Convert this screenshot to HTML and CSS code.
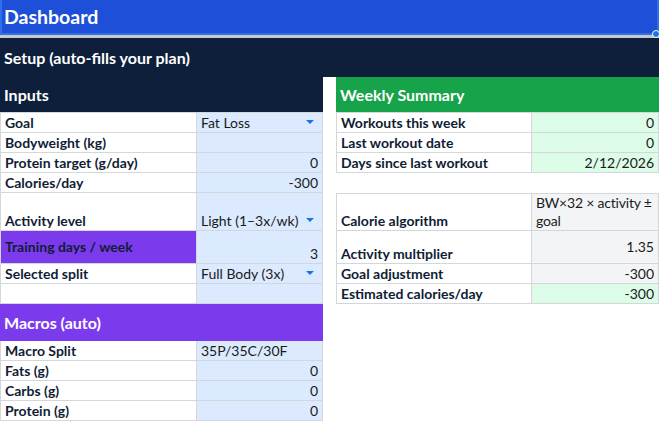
FILE: index.html
```html
<!DOCTYPE html>
<html lang="en">
<head>
<meta charset="utf-8">
<title>Dashboard</title>
<link rel="stylesheet" href="styles.css">
</head>
<body>
<div class="page">
  <header class="titlebar">
    <span class="title">Dashboard</span>
    <span class="handle"></span>
  </header>
  <div class="freeze"></div>
  <main class="sheet">
    <div class="c span5 navy head mid">Setup (auto-fills your plan)</div>

    <div class="c span2 navy head mid">Inputs</div>
    <div class="c col-d span2 green head mid">Weekly Summary</div>

    <div class="c col-a lab top">Goal</div>
    <div class="c col-b blue top dd"><span>Fat Loss</span><i class="arrow"></i></div>
    <div class="c col-d lab top">Workouts this week</div>
    <div class="c col-e mint num top">0</div>

    <div class="c col-a lab">Bodyweight (kg)</div>
    <div class="c col-b blue"></div>
    <div class="c col-d lab">Last workout date</div>
    <div class="c col-e mint num">0</div>

    <div class="c col-a lab">Protein target (g/day)</div>
    <div class="c col-b blue num">0</div>
    <div class="c col-d lab">Days since last workout</div>
    <div class="c col-e mint num">2/12/2026</div>

    <div class="c col-a lab">Calories/day</div>
    <div class="c col-b blue num">-300</div>

    <div class="c col-a lab">Activity level</div>
    <div class="c col-b blue dd"><span>Light (1–3x/wk)</span><i class="arrow"></i></div>
    <div class="c col-d lab top">Calorie algorithm</div>
    <div class="c col-e grey wrap top">BW×32 × activity ± goal</div>

    <div class="c col-a purple lab mid">Training days / week</div>
    <div class="c col-b blue num">3</div>
    <div class="c col-d lab">Activity multiplier</div>
    <div class="c col-e grey num mid">1.35</div>

    <div class="c col-a lab">Selected split</div>
    <div class="c col-b blue dd"><span>Full Body (3x)</span><i class="arrow"></i></div>
    <div class="c col-d lab">Goal adjustment</div>
    <div class="c col-e grey num">-300</div>

    <div class="c col-a"></div>
    <div class="c col-b blue"></div>
    <div class="c col-d lab">Estimated calories/day</div>
    <div class="c col-e mint num">-300</div>

    <div class="c span2 violet head mid">Macros (auto)</div>

    <div class="c col-a lab">Macro Split</div>
    <div class="c col-b blue">35P/35C/30F</div>

    <div class="c col-a lab">Fats (g)</div>
    <div class="c col-b blue num">0</div>

    <div class="c col-a lab">Carbs (g)</div>
    <div class="c col-b blue num">0</div>

    <div class="c col-a lab">Protein (g)</div>
    <div class="c col-b blue num">0</div>
  </main>
</div>
</body>
</html>
```
FILE: styles.css
```css
* { box-sizing: border-box; }
html, body { margin: 0; padding: 0; background: #ffffff; }
body {
  font-family: "Lato", "Carlito", "Liberation Sans", sans-serif;
  color: #1a1a1a;
  width: 659px;
  height: 422px;
  overflow: hidden;
}
.page { position: relative; width: 659px; }

.titlebar {
  position: relative;
  height: 35px;
  background: #1e4fd8;
  border: 2px solid #2f6fe8;
  border-top: 0;
  display: flex;
  align-items: center;
  padding-left: 2px;
  padding-top: 1px;
}
.title {
  color: #ffffff;
  font-weight: 700;
  font-size: 19.5px;
  line-height: 1;
}
.handle {
  position: absolute;
  right: -3px;
  bottom: -5px;
  width: 8px;
  height: 8px;
  border-radius: 50%;
  background: #1a73e8;
  border: 1px solid #ffffff;
}
.freeze { height: 3px; background: #c9c9c9; }

.sheet {
  display: grid;
  grid-template-columns: 197px 126px 13px 196px 127px;
  grid-template-rows: 39px 35px 21px 20px 20px 20px 38px 33px 20px 20px 37px 20px 20px 20px 20px;
}

.c {
  display: flex;
  align-items: flex-end;
  padding: 0 4px 1px 4px;
  font-size: 14px;
  line-height: 17px;
  border-right: 1px solid #d3d6db;
  border-bottom: 1px solid #d3d6db;
  white-space: nowrap;
  overflow: hidden;
}
.col-a { grid-column: 1; border-left: 1px solid #d3d6db; }
.col-b { grid-column: 2; }
.col-d { grid-column: 4; border-left: 1px solid #d3d6db; }
.col-e { grid-column: 5; }
.span5 { grid-column: 1 / span 5; }
.span2 { grid-column: 1 / span 2; }
.col-d.span2 { grid-column: 4 / span 2; }
.top { border-top: 1px solid #d3d6db; }

.head {
  color: #ffffff;
  font-weight: 700;
  font-size: 16px;
  border: 0;
  padding-left: 4px;
}
.mid { align-items: center; }
.navy { background: #0d1f3b; }
.green { background: #17a34a; }
.violet { background: #7c3aed; }
.purple { background: #7c3aed; }

.lab { font-weight: 700; color: #0f1d35; }
.blue { background: #dbeafe; }
.mint { background: #dcfce7; }
.grey { background: #f3f4f6; }
.num { justify-content: flex-end; }

.dd { justify-content: space-between; padding-right: 8px; }
.arrow {
  display: block;
  width: 0;
  height: 0;
  border-left: 4px solid transparent;
  border-right: 4px solid transparent;
  border-top: 4px solid #1a73e8;
  margin-bottom: 7px;
}
.wrap {
  white-space: normal;
  line-height: 18px;
  padding-bottom: 0;
  padding-right: 1px;
  letter-spacing: -0.2px;
}
```
